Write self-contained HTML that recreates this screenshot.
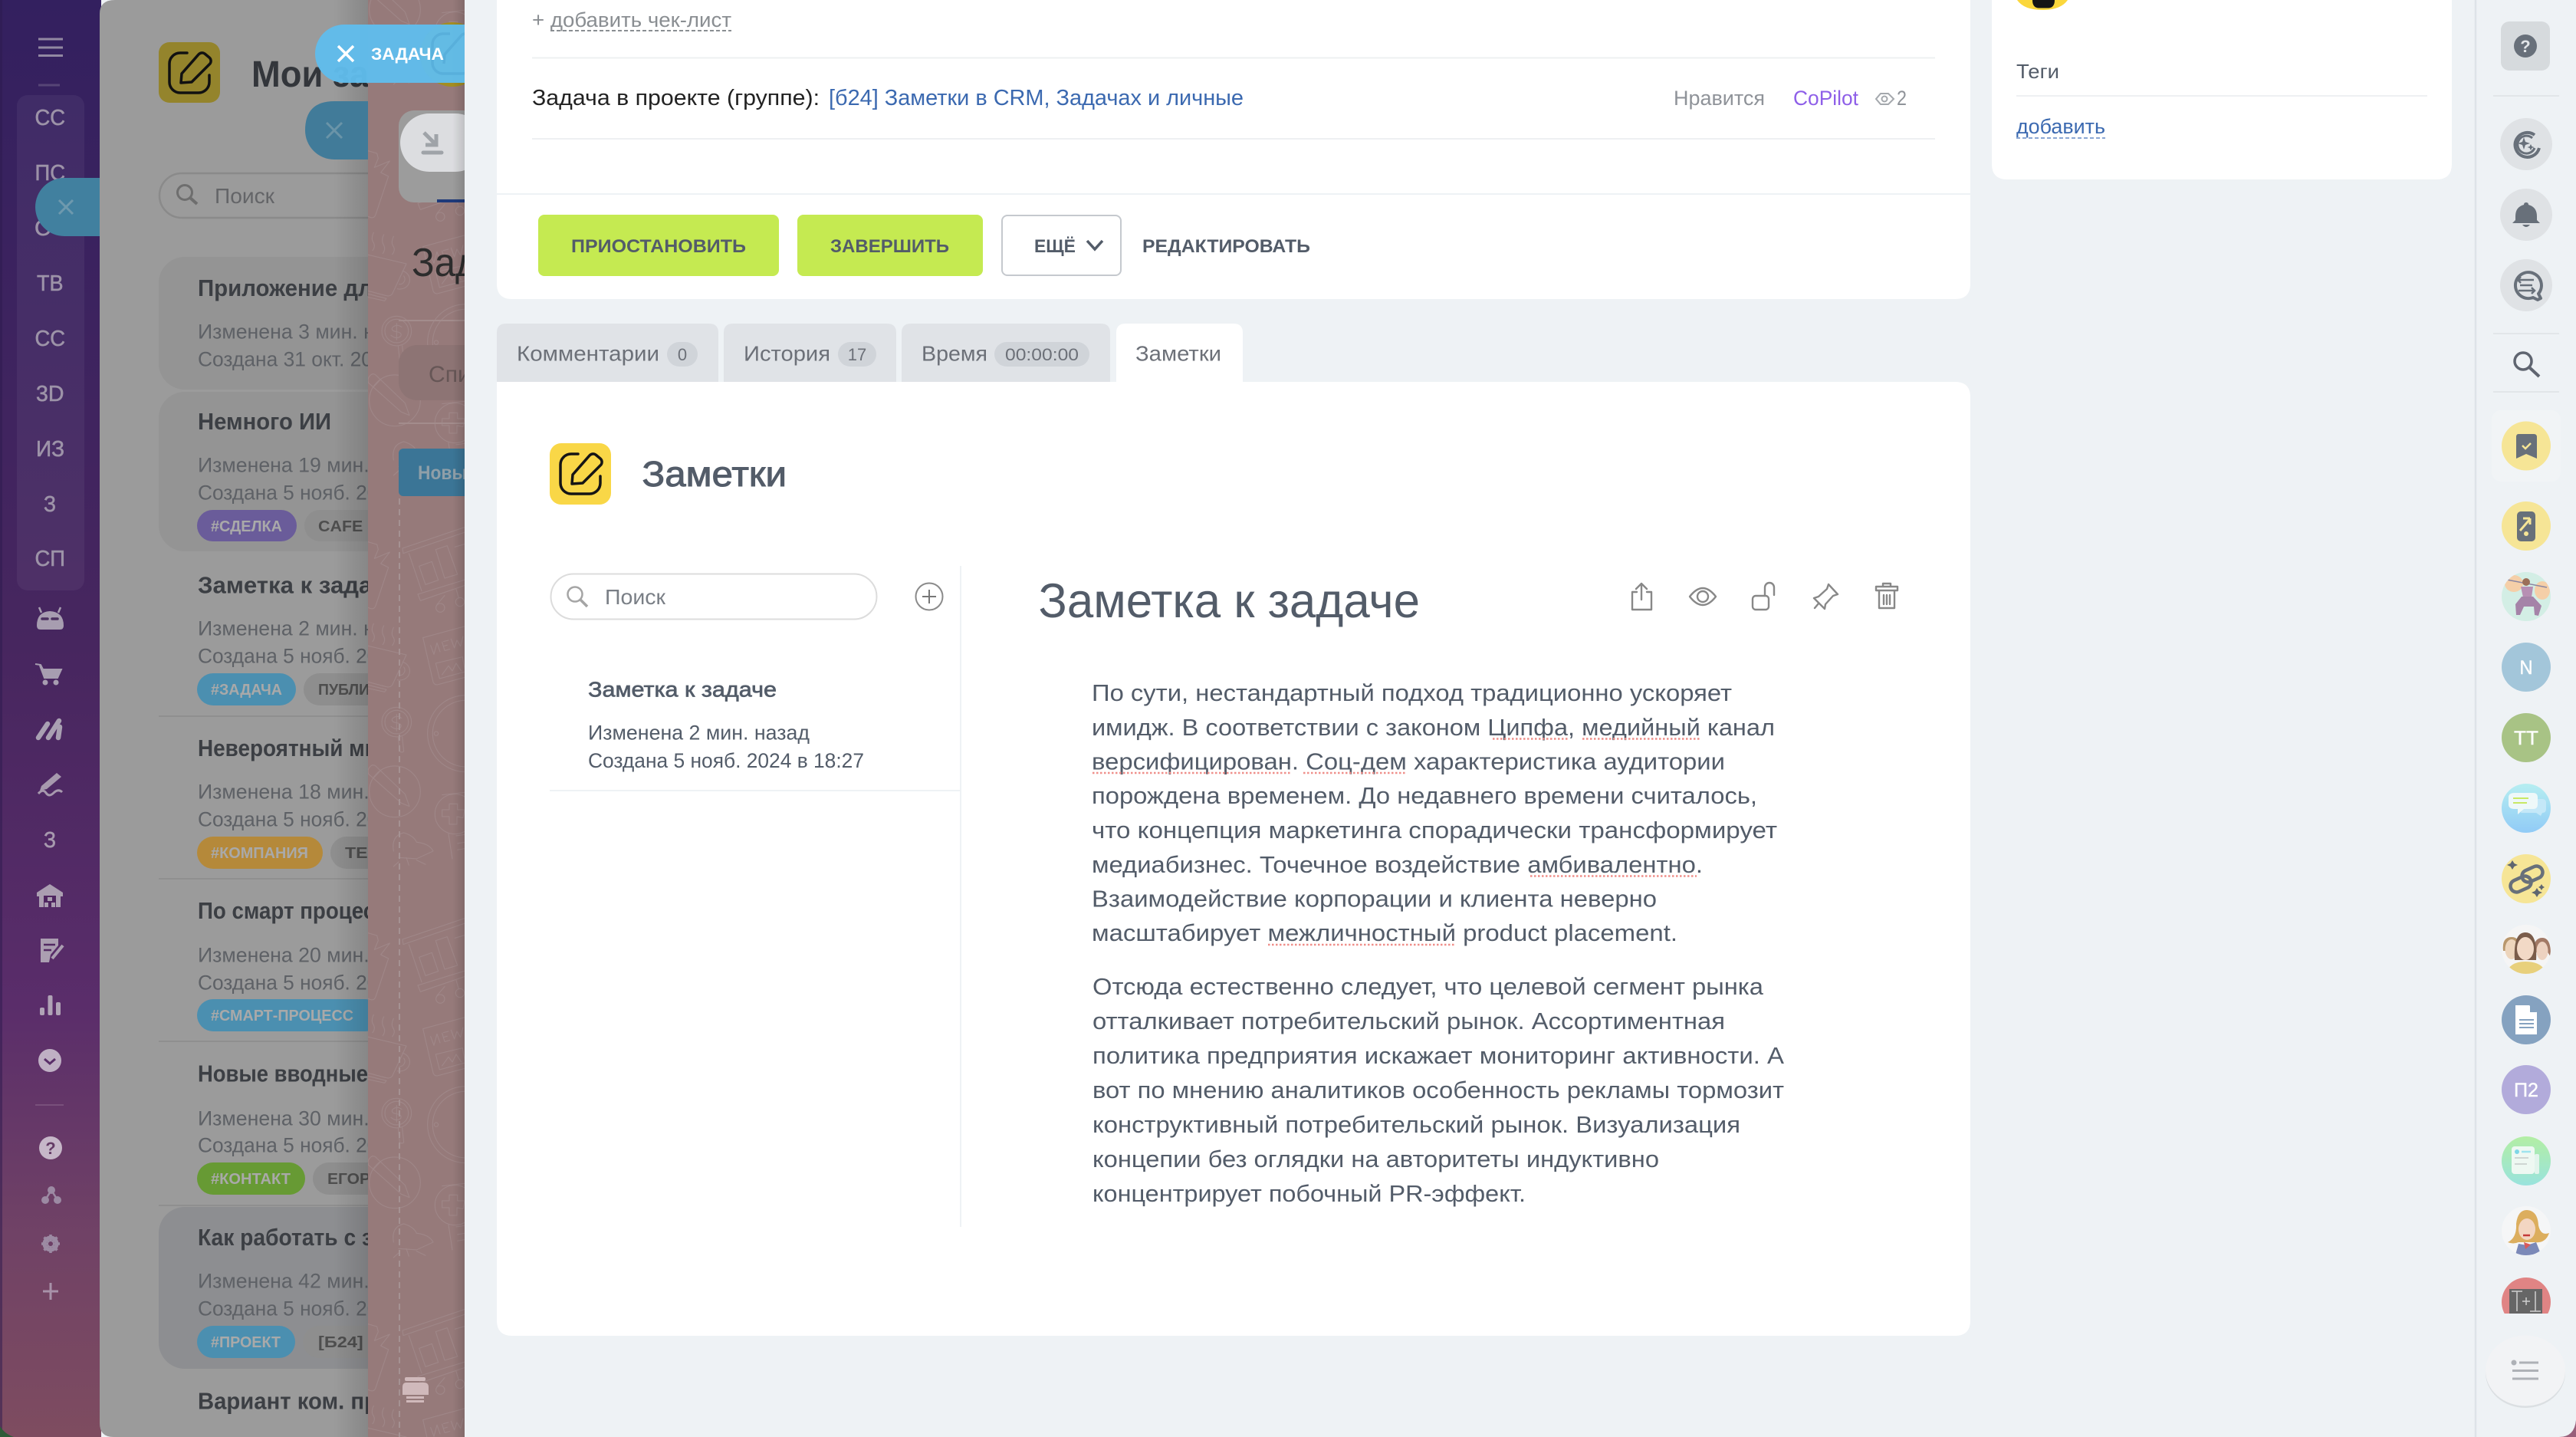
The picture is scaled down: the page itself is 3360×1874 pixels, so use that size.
<!DOCTYPE html>
<html lang="ru"><head><meta charset="utf-8"><title>Заметки</title>
<style>
html,body{margin:0;padding:0;width:3360px;height:1874px;overflow:hidden;background:#eef2f5}
svg{display:block}
text{font-family:"Liberation Sans","Noto Sans CJK SC",sans-serif;white-space:pre}
.side{font-size:29px;fill:#9d93a8;stroke:#9d93a8;stroke-width:.6}
.gt{font-size:31px;font-weight:bold;fill:#3c3f44;transform:translateY(-1px)}
.gl{font-size:27px;fill:#5e6166;transform:translateY(-1.5px)}
.tag{font-size:20px;font-weight:bold;fill:#a9a9a9}
.tg2{font-size:20px;font-weight:bold;fill:#4e4e4e}
.b{font-size:31px;fill:#535c69;transform:translateX(-1px)}
.tab{font-size:28px;fill:#6c7078;transform:translateY(-1.5px)}
.btn{font-size:24px;font-weight:bold;fill:#535c69}
.mut{font-size:27px;fill:#8f9399}
.sm{font-size:26px;fill:#535c69}
.av{font-size:25px;fill:#fff;stroke:#fff;stroke-width:.4}
</style></head><body>
<svg xmlns="http://www.w3.org/2000/svg" width="3360" height="1874" viewBox="0 0 3360 1874">
<defs>
<linearGradient id="sb" x1="0" y1="0" x2="0" y2="1">
<stop offset="0" stop-color="#33205f"/><stop offset=".45" stop-color="#47265f"/><stop offset=".7" stop-color="#5a2d6a"/><stop offset=".85" stop-color="#6f4166"/><stop offset="1" stop-color="#7e4c60"/>
</linearGradient>
<linearGradient id="sh1" x1="0" y1="0" x2="1" y2="0"><stop offset="0" stop-color="#000" stop-opacity="0"/><stop offset="1" stop-color="#000" stop-opacity=".13"/></linearGradient>
<linearGradient id="chat" x1="0" y1="0" x2="0" y2="1"><stop offset="0" stop-color="#b6eef1"/><stop offset="1" stop-color="#91cbf6"/></linearGradient>
<linearGradient id="news" x1="0" y1="0" x2="0" y2="1"><stop offset="0" stop-color="#b3eea4"/><stop offset="1" stop-color="#99e3dd"/></linearGradient>
<clipPath id="cg"><rect x="130" y="0" width="350" height="1874"/></clipPath>
<clipPath id="cp"><rect x="480" y="0" width="126" height="1874"/></clipPath>
<clipPath id="cs"><rect x="0" y="0" width="606" height="1874"/></clipPath>
<clipPath id="cr"><rect x="3240" y="1660" width="110" height="53"/></clipPath>
<clipPath id="cph"><circle cx="3295" cy="778" r="32"/></clipPath>
<clipPath id="cpe"><circle cx="3295" cy="1238" r="32"/></clipPath>
<clipPath id="cwo"><circle cx="3295" cy="1605" r="32"/></clipPath>
<pattern id="pp" patternUnits="userSpaceOnUse" x="480" y="174" width="126" height="510">
<g transform="translate(0,-84) scale(.3333)" fill="none" stroke="#9f8788" stroke-width="3.200" stroke-linejoin="round" stroke-linecap="round">
<path d="M135 345 L380 262 M138 365 L380 282 M135 345 L138 365 M160 365 L210 512 M195 525 L380 468 M195 525 L205 550 L380 490"/>
<path d="M200 415 L250 397 L275 470 L225 487Z M265 350 L310 335 L350 447 L300 462Z M340 340 L380 328 M300 530 L270 565 M345 505 L355 540"/>
<circle cx="283" cy="578" r="17"/><circle cx="360" cy="555" r="17"/>
<path d="M0 320 L35 330 L40 350 L25 385 L85 360 L50 405 L80 420 L30 570 Q24 586 8 580 L0 577"/>
<path d="M22 640 Q10 665 22 680 Q30 695 18 710 M62 648 Q50 670 62 690 Q70 705 58 722 M100 655 Q88 680 100 695 Q108 710 95 725"/>
<path d="M0 727 L150 762 L95 880 Q85 892 68 886 L0 868 M135 790 A38 36 0 0 1 115 860 M140 810 A20 20 0 0 1 122 842 M0 880 L72 898 L65 907 L0 893"/>
<path d="M215 695 L380 650 M215 695 L255 868 Q260 882 275 878 L380 850 M265 795 L370 770 L380 828 L280 855Z M290 840 L315 805 L330 825 L345 795 L365 825"/>
<path d="M245 725 L258 760 L270 715 L282 750 M290 712 L300 745 M295 710 L315 705 M296 728 L310 724 M302 745 L320 740 M325 700 L338 735 L348 705 L362 728 L372 690"/>
<circle cx="383" cy="1070" r="150"/><circle cx="383" cy="1070" r="130"/><circle cx="267" cy="1070" r="8"/>
<circle cx="112" cy="1025" r="58"/><circle cx="112" cy="1025" r="46"/>
<path d="M132 1010 Q112 995 95 1012 Q90 1025 112 1028 Q135 1032 128 1045 Q112 1060 90 1042 M112 995 L112 1060 M118 1083 L124 1140 Q132 1146 140 1140 L134 1083"/>
<circle cx="105" cy="1297" r="100"/>
<path d="M2 1228 L130 1342 L162 1355 L145 1307 L30 1197 Q18 1188 8 1200 Q-4 1212 2 1228 M20 1246 L50 1214"/>
<circle cx="340" cy="1385" r="78"/>
<path d="M318 1345 L350 1345 L350 1368 L378 1368 L372 1400 L348 1395 L348 1425 L318 1425 L318 1395 L290 1395 L290 1368 L318 1368Z"/>
<path d="M290 1310 L380 1300 M315 1462 L330 1560 M345 1470 L380 1465 M350 1500 L380 1495 M350 1525 L380 1520"/>
<path d="M100 1530 Q90 1470 140 1458 Q180 1470 190 1495 Q240 1500 255 1530 L190 1560 L120 1555"/>
<path d="M150 1555 L160 1585 M190 1565 L225 1582 M120 1572 L100 1590"/>
</g>
</pattern>
</defs>

<!-- page bg -->
<rect width="3360" height="1874" fill="#eef2f5"/>

<g clip-path="url(#cs)">
<!-- left sidebar -->
<rect width="132" height="1874" fill="url(#sb)"/>
<rect width="3" height="1874" fill="#2b1a4d" opacity=".5"/>
<path d="M0 1860 L0 1874 L18 1874 Q6 1870 0 1860Z" fill="#2d5c38"/>
<g stroke="#9288a2" stroke-width="3"><path d="M50 51H82M50 62H82M50 72.500H82"/><path d="M50 111H78" opacity=".35"/></g>
<rect x="22" y="124" width="88" height="646" rx="14" fill="#fff" opacity=".05"/>
<text class="side" x="45.500" y="163" textLength="39.500" lengthAdjust="spacingAndGlyphs">СС</text>
<text class="side" x="45.500" y="235" textLength="39.500" lengthAdjust="spacingAndGlyphs">ПС</text>
<text class="side" x="45" y="307" textLength="40" lengthAdjust="spacingAndGlyphs">СЧ</text>
<text class="side" x="48" y="379" textLength="34.500" lengthAdjust="spacingAndGlyphs">ТВ</text>
<text class="side" x="45.500" y="451" textLength="39.500" lengthAdjust="spacingAndGlyphs">СС</text>
<text class="side" x="47" y="523" textLength="36.500" lengthAdjust="spacingAndGlyphs">3D</text>
<text class="side" x="47" y="595" textLength="37" lengthAdjust="spacingAndGlyphs">ИЗ</text>
<text class="side" x="57" y="667" textLength="16" lengthAdjust="spacingAndGlyphs">З</text>
<text class="side" x="45.500" y="738" textLength="39.500" lengthAdjust="spacingAndGlyphs">СП</text>
<!-- android -->
<path d="M48 816 Q48 798 65 797 Q83 798 83 816 Q83 821 78 821 H53 Q48 821 48 816Z" fill="#a79db0"/>
<path d="M54 799 L51 792 M76 799 L79 792" stroke="#a79db0" stroke-width="2.500"/>
<path d="M55 807 h7 M68 807 h7" stroke="#4a2f5e" stroke-width="3.500" stroke-linecap="round"/>
<!-- cart -->
<path d="M46 866 L53 867 L56 873 H80 L75 884 H58 L52 868" fill="#a79db0" stroke="#a79db0" stroke-width="2"/>
<circle cx="59" cy="890" r="3.500" fill="#a79db0"/><circle cx="73" cy="890" r="3.500" fill="#a79db0"/>
<!-- m logo -->
<path d="M50 962 L62 944 M63 962 L77 940 M76 962 L78 948" fill="none" stroke="#a9a0b2" stroke-width="6.500" stroke-linecap="round"/>
<!-- sign -->
<path d="M54 1025 L74 1008 L80 1013 L61 1029 L52 1031Z" fill="#a799ae"/>
<path d="M50 1035 Q56 1028 60 1034 T70 1034 T81 1033" fill="none" stroke="#a799ae" stroke-width="3"/>
<text class="side" x="57" y="1105" textLength="16" lengthAdjust="spacingAndGlyphs" style="fill:#a799ae;stroke:#a799ae">З</text>
<!-- warehouse -->
<path d="M48 1164 L65 1153 L82 1164 V1169 H79 V1183 H51 V1169 H48Z" fill="#ab9eb1"/>
<path d="M57 1168 H73 V1183 H57Z" fill="#4f2660"/><rect x="62" y="1170" width="6" height="5" fill="#ab9eb1"/><rect x="58" y="1177" width="5" height="6" fill="#ab9eb1"/><rect x="67" y="1177" width="5" height="6" fill="#ab9eb1"/>
<!-- doc edit -->
<path d="M53 1224 H76 V1233 L66 1245 L64 1255 H53Z" fill="#ab9eb1"/>
<path d="M57 1232 H72 M57 1239 H67" stroke="#532a63" stroke-width="2.500"/>
<path d="M68 1250 L82 1233" stroke="#ab9eb1" stroke-width="4"/>
<!-- bars -->
<rect x="52" y="1314" width="6" height="10" rx="2" fill="#b0a3b6"/><rect x="62.500" y="1298" width="6" height="26" rx="2" fill="#b0a3b6"/><rect x="73" y="1307" width="6" height="17" rx="2" fill="#b0a3b6"/>
<!-- chevron circle -->
<circle cx="65" cy="1383" r="15" fill="#bfb0c4"/><path d="M58 1381 L65 1387 L72 1381" fill="none" stroke="#5a2f69" stroke-width="3"/>
<path d="M46 1441 H83" stroke="#fff" stroke-opacity=".13" stroke-width="2"/>
<circle cx="66" cy="1497" r="15" fill="#c6b7c8"/>
<text x="66" y="1505" text-anchor="middle" style="font-size:22px;font-weight:bold;fill:#653c66">?</text>
<!-- network -->
<g fill="#9c8aa3"><circle cx="67" cy="1552" r="5"/><circle cx="59" cy="1565" r="5"/><circle cx="75" cy="1565" r="5"/></g><path d="M67 1552 L59 1565 M67 1552 L75 1565" stroke="#9c8aa3" stroke-width="2.500"/>
<!-- gear -->
<circle cx="66" cy="1622" r="8" fill="none" stroke="#9c8aa3" stroke-width="5"/>
<path d="M66 1610V1634M54 1622H78M57.500 1613.500L74.500 1630.500M74.500 1613.500L57.500 1630.500" stroke="#9c8aa3" stroke-width="3.500"/>
<circle cx="66" cy="1622" r="3" fill="#6c3f66"/>
<path d="M66 1673V1695M56 1684H76" stroke="#a892a9" stroke-width="3"/>

<!-- gray panel -->
<path d="M130 18 Q130 0 150 0 H480 V1874 H148 Q130 1874 130 1856Z" fill="#9b9b9b"/>
<g clip-path="url(#cg)">
<rect x="207" y="55" width="80" height="79" rx="14" fill="#94842c"/>
<g transform="translate(-510,-523)" fill="none" stroke="#111" stroke-width="3.500" stroke-linecap="round" stroke-linejoin="round">
<path d="M754 592 H745 A14 14 0 0 0 731 606 V630 A14 14 0 0 0 745 644 H769 A14 14 0 0 0 783 630 V621"/>
<path d="M746 631 L747 619 L769 594 A6 6 0 0 1 777 593 L783 598 A6 6 0 0 1 784 606 L760 630Z"/>
</g>
<text x="328" y="113" textLength="284" lengthAdjust="spacingAndGlyphs" style="font-size:48px;font-weight:bold;fill:#33363b">Мои заметки</text>
<rect x="208" y="226" width="330" height="58" rx="29" fill="none" stroke="#8a8a8a" stroke-width="2.500"/>
<circle cx="241" cy="251" r="9.500" fill="none" stroke="#6e6e6e" stroke-width="3"/><path d="M248 258 L257 266" stroke="#6e6e6e" stroke-width="4"/>
<text x="280" y="265" textLength="78" lengthAdjust="spacingAndGlyphs" style="font-size:28px;fill:#646568">Поиск</text>

<!-- items -->
<rect x="207" y="335" width="340" height="173" rx="34" fill="#949494"/>
<rect x="207" y="511" width="340" height="208" rx="34" fill="#949494"/>
<rect x="207" y="1574" width="340" height="211" rx="34" fill="#8d8e91"/>
<g stroke="#8f8f8f" stroke-width="2"><path d="M207 934H480M207 1146H480M207 1358H480M207 1572H480"/></g>

<text class="gt" x="258" y="387" textLength="245" lengthAdjust="spacingAndGlyphs">Приложение для</text>
<text class="gl" x="258" y="443" textLength="288" lengthAdjust="spacingAndGlyphs">Изменена 3 мин. назад</text>
<text class="gl" x="258" y="479" textLength="352" lengthAdjust="spacingAndGlyphs">Создана 31 окт. 2024 в 18:27</text>

<text class="gt" x="258" y="561" textLength="174" lengthAdjust="spacingAndGlyphs">Немного ИИ</text>
<text class="gl" x="258" y="617" textLength="303" lengthAdjust="spacingAndGlyphs">Изменена 19 мин. назад</text>
<text class="gl" x="258" y="653" textLength="359" lengthAdjust="spacingAndGlyphs">Создана 5 нояб. 2024 в 18:27</text>
<rect x="257" y="665" width="130" height="41" rx="20.500" fill="#6a5c9a"/>
<text class="tag" x="275" y="693" textLength="93" lengthAdjust="spacingAndGlyphs">#СДЕЛКА</text>
<rect x="397" y="665" width="140" height="41" rx="20.500" fill="#8e8e8e"/>
<text class="tg2" x="415" y="693" textLength="125" lengthAdjust="spacingAndGlyphs">CAFE SHOP</text>

<text class="gt" x="258" y="774.500" textLength="262" lengthAdjust="spacingAndGlyphs">Заметка к задаче</text>
<text class="gl" x="258" y="830" textLength="288" lengthAdjust="spacingAndGlyphs">Изменена 2 мин. назад</text>
<text class="gl" x="258" y="866" textLength="359" lengthAdjust="spacingAndGlyphs">Создана 5 нояб. 2024 в 18:27</text>
<rect x="257" y="878" width="129" height="42" rx="21" fill="#4b8fb0"/>
<text class="tag" x="275" y="906" textLength="93" lengthAdjust="spacingAndGlyphs">#ЗАДАЧА</text>
<rect x="396" y="878" width="140" height="42" rx="21" fill="#8e8e8e"/>
<text class="tg2" x="415" y="906" textLength="135" lengthAdjust="spacingAndGlyphs">ПУБЛИКАЦИЯ</text>

<text class="gt" x="258" y="987" textLength="252" lengthAdjust="spacingAndGlyphs">Невероятный мир</text>
<text class="gl" x="258" y="1043" textLength="303" lengthAdjust="spacingAndGlyphs">Изменена 18 мин. назад</text>
<text class="gl" x="258" y="1079" textLength="359" lengthAdjust="spacingAndGlyphs">Создана 5 нояб. 2024 в 18:27</text>
<rect x="257" y="1091" width="164" height="42" rx="21" fill="#b5893a"/>
<text class="tag" x="275" y="1119" textLength="127" lengthAdjust="spacingAndGlyphs">#КОМПАНИЯ</text>
<rect x="431" y="1091" width="120" height="42" rx="21" fill="#8e8e8e"/>
<text class="tg2" x="450" y="1119" textLength="60" lengthAdjust="spacingAndGlyphs">ТЕСТ</text>

<text class="gt" x="258" y="1199" textLength="262" lengthAdjust="spacingAndGlyphs">По смарт процессу</text>
<text class="gl" x="258" y="1256" textLength="303" lengthAdjust="spacingAndGlyphs">Изменена 20 мин. назад</text>
<text class="gl" x="258" y="1292" textLength="359" lengthAdjust="spacingAndGlyphs">Создана 5 нояб. 2024 в 18:27</text>
<rect x="257" y="1303" width="240" height="42" rx="21" fill="#4b8fb0"/>
<text class="tag" x="275" y="1331" textLength="186" lengthAdjust="spacingAndGlyphs">#СМАРТ-ПРОЦЕСС</text>

<text class="gt" x="258" y="1411.500" textLength="222" lengthAdjust="spacingAndGlyphs">Новые вводные</text>
<text class="gl" x="258" y="1469" textLength="303" lengthAdjust="spacingAndGlyphs">Изменена 30 мин. назад</text>
<text class="gl" x="258" y="1504" textLength="359" lengthAdjust="spacingAndGlyphs">Создана 5 нояб. 2024 в 18:27</text>
<rect x="257" y="1516" width="141" height="42" rx="21" fill="#679a34"/>
<text class="tag" x="275" y="1544" textLength="104" lengthAdjust="spacingAndGlyphs">#КОНТАКТ</text>
<rect x="408" y="1516" width="120" height="42" rx="21" fill="#8e8e8e"/>
<text class="tg2" x="427" y="1544" textLength="56" lengthAdjust="spacingAndGlyphs">ЕГОР</text>

<text class="gt" x="258" y="1625" textLength="228" lengthAdjust="spacingAndGlyphs">Как работать с з</text>
<text class="gl" x="258" y="1681" textLength="303" lengthAdjust="spacingAndGlyphs">Изменена 42 мин. назад</text>
<text class="gl" x="258" y="1717" textLength="359" lengthAdjust="spacingAndGlyphs">Создана 5 нояб. 2024 в 18:27</text>
<rect x="257" y="1729" width="128" height="42" rx="21" fill="#4b8fb0"/>
<text class="tag" x="275" y="1757" textLength="91" lengthAdjust="spacingAndGlyphs">#ПРОЕКТ</text>
<rect x="395" y="1729" width="140" height="42" rx="21" fill="#8e8e8e"/>
<text class="tg2" x="415" y="1757" textLength="80" lengthAdjust="spacingAndGlyphs">[Б24] З</text>

<text class="gt" x="258" y="1838.500" textLength="235" lengthAdjust="spacingAndGlyphs">Вариант ком. пр</text>
<rect x="435" y="0" width="45" height="1874" fill="url(#sh1)"/>
</g>

<!-- pink panel -->
<rect x="480" y="0" width="126" height="1874" fill="#967a7a"/>
<rect x="480" y="0" width="126" height="1874" fill="url(#pp)"/>
<g clip-path="url(#cp)">
<path d="M521 650V1874" stroke="#a59293" stroke-width="2" stroke-dasharray="8 6"/>
<circle cx="590" cy="71" r="42" fill="#a38d22"/>
<rect x="520" y="144" width="110" height="120" rx="20" fill="#9c9c9c"/>
<rect x="522" y="148" width="110" height="76" rx="38" fill="#dcdde0"/>
<path d="M553 173 L568 188 M569 175 V189 H555" fill="none" stroke="#9fa3a8" stroke-width="5"/><path d="M552 199 H576" stroke="#9fa3a8" stroke-width="5" stroke-linecap="round"/>
<rect x="570" y="260" width="36" height="4" fill="#1f3a7a"/>
<text x="537" y="360" textLength="165" lengthAdjust="spacingAndGlyphs" style="font-size:52px;fill:#2c2c2c">Задача</text>
<path d="M520 418H606M520 552H606" stroke="#a38c8c" stroke-width="2"/>
<rect x="520" y="450" width="140" height="72" rx="24" fill="#8d7474"/>
<text x="559" y="498" textLength="100" lengthAdjust="spacingAndGlyphs" style="font-size:30px;fill:#665656">Список</text>
<rect x="520" y="585" width="140" height="62" rx="6" fill="#3b7596"/>
<text x="545" y="625" textLength="78" lengthAdjust="spacingAndGlyphs" style="font-size:25px;font-weight:bold;fill:#8f9fa8">Новый</text>
<!-- printer -->
<g fill="#d0b9bb"><rect x="528" y="1796" width="27" height="5" rx="2"/><path d="M530 1803H553Q559 1803 559 1809V1819H525V1809Q525 1803 530 1803Z"/><rect x="530" y="1821" width="23" height="3"/><rect x="530" y="1826" width="23" height="3"/></g>
<rect x="590" y="0" width="16" height="1874" fill="url(#sh1)"/>
</g>
<!-- pills -->
<path d="M431 132 H480 V208 H436 A38 38 0 0 1 398 170 Q398 132 436 132Z" fill="#417b99"/>
<path d="M426 160 L446 180 M446 160 L426 180" stroke="#6a94a8" stroke-width="3"/>
<path d="M84 232 H130 V308 H84 A38 38 0 0 1 84 232Z" fill="#41809f"/>
<path d="M77 261 L95 279 M95 261 L77 279" stroke="#6e99ae" stroke-width="3"/>
<path d="M449 32 H606 V108 H449 A38 38 0 0 1 449 32Z" fill="#60bcec" opacity=".96"/>
<g transform="translate(-167,-548)" fill="none" stroke="#58afdb" stroke-width="3.500">
<path d="M754 592 H745 A14 14 0 0 0 731 606 V630 A14 14 0 0 0 745 644 H769 A14 14 0 0 0 783 630 V621"/>
<path d="M746 631 L747 619 L769 594 A6 6 0 0 1 777 593"/></g>
<path d="M441 60 L461 80 M461 60 L441 80" stroke="#fff" stroke-width="3.500"/>
<text x="484" y="78" textLength="95" lengthAdjust="spacingAndGlyphs" style="font-size:22px;font-weight:bold;fill:#fff">ЗАДАЧА</text>
</g>

<!-- top card -->
<path d="M648 0 H2570 V370 Q2570 390 2550 390 H668 Q648 390 648 370Z" fill="#fff"/>
<text x="694" y="35" textLength="260" lengthAdjust="spacingAndGlyphs" style="font-size:27px;fill:#8a8e92">+ добавить чек-лист</text>
<path d="M718 40H954" stroke="#8a8e92" stroke-width="2" stroke-dasharray="5 3"/>
<path d="M694 75.500H2524M694 181H2524" stroke="#eef0f2" stroke-width="2"/>
<path d="M648 253H2570" stroke="#eef2f5" stroke-width="2"/>
<text x="694" y="137" textLength="375" lengthAdjust="spacingAndGlyphs" style="font-size:29px;fill:#222">Задача в проекте (группе):</text>
<text x="1081" y="137" textLength="541" lengthAdjust="spacingAndGlyphs" style="font-size:29px;fill:#3b69b0">[б24] Заметки в CRM, Задачах и личные</text>
<text class="mut" x="2183" y="137" textLength="119" lengthAdjust="spacingAndGlyphs">Нравится</text>
<text x="2339" y="137" textLength="85" lengthAdjust="spacingAndGlyphs" style="font-size:27px;fill:#8e5fe8">CoPilot</text>
<path d="M2447 129 L2453 122 H2463 L2470 129 L2463 136 H2453Z" fill="none" stroke="#a4a8ad" stroke-width="2"/><circle cx="2458" cy="129" r="3.500" fill="none" stroke="#a4a8ad" stroke-width="2"/>
<text class="mut" x="2474" y="137" textLength="13" lengthAdjust="spacingAndGlyphs">2</text>
<rect x="702" y="280" width="314" height="80" rx="8" fill="#c5ea51"/>
<text class="btn" x="745" y="329" textLength="228" lengthAdjust="spacingAndGlyphs">ПРИОСТАНОВИТЬ</text>
<rect x="1040" y="280" width="242" height="80" rx="8" fill="#c5ea51"/>
<text class="btn" x="1083" y="329" textLength="155" lengthAdjust="spacingAndGlyphs">ЗАВЕРШИТЬ</text>
<rect x="1307" y="281" width="155" height="78" rx="7" fill="#fff" stroke="#c5c9ce" stroke-width="2"/>
<text class="btn" x="1349" y="329" textLength="54" lengthAdjust="spacingAndGlyphs">ЕЩЁ</text>
<path d="M1418 314 L1428 325 L1438 314" fill="none" stroke="#535c69" stroke-width="3.500"/>
<text class="btn" x="1490" y="329" textLength="219" lengthAdjust="spacingAndGlyphs">РЕДАКТИРОВАТЬ</text>

<!-- tabs -->
<g fill="#e0e3e7">
<path d="M648 498V434Q648 422 660 422H925Q937 422 937 434V498Z"/>
<path d="M944 498V434Q944 422 956 422H1157Q1169 422 1169 434V498Z"/>
<path d="M1176 498V434Q1176 422 1188 422H1436Q1448 422 1448 434V498Z"/>
</g>
<path d="M1456 498V434Q1456 422 1468 422H1609Q1621 422 1621 434V498Z" fill="#fff"/>
<text class="tab" x="674" y="472" textLength="186" lengthAdjust="spacingAndGlyphs">Комментарии</text>
<rect x="870" y="446" width="40" height="32" rx="16" fill="#d0d4d9"/>
<text x="890" y="470" text-anchor="middle" style="font-size:22px;fill:#6c7078">0</text>
<text class="tab" x="970" y="472" textLength="113" lengthAdjust="spacingAndGlyphs">История</text>
<rect x="1093" y="446" width="50" height="32" rx="16" fill="#d0d4d9"/>
<text x="1118" y="470" text-anchor="middle" style="font-size:22px;fill:#6c7078">17</text>
<text class="tab" x="1202" y="472" textLength="86" lengthAdjust="spacingAndGlyphs">Время</text>
<rect x="1297" y="446" width="124" height="32" rx="16" fill="#d0d4d9"/>
<text x="1311" y="470" textLength="96" lengthAdjust="spacingAndGlyphs" style="font-size:22px;fill:#6c7078">00:00:00</text>
<text class="tab" x="1481" y="472" textLength="112" lengthAdjust="spacingAndGlyphs">Заметки</text>

<!-- notes card -->
<path d="M648 498 H2550 Q2570 498 2570 518 V1722 Q2570 1742 2550 1742 H668 Q648 1742 648 1722Z" fill="#fff"/>
<rect x="717" y="578" width="80" height="80" rx="15" fill="#f9d747"/>
<g fill="none" stroke="#151515" stroke-width="3.500" stroke-linecap="round" stroke-linejoin="round">
<path d="M754 592 H745 A14 14 0 0 0 731 606 V630 A14 14 0 0 0 745 644 H769 A14 14 0 0 0 783 630 V621"/>
<path d="M746 631 L747 619 L769 594 A6 6 0 0 1 777 593 L783 598 A6 6 0 0 1 784 606 L760 630Z"/>
</g>
<text x="837.500" y="634" textLength="188.500" lengthAdjust="spacingAndGlyphs" style="font-size:46px;fill:#535c69;stroke:#535c69;stroke-width:1">Заметки</text>
<rect x="718.500" y="748.500" width="425" height="59" rx="29.500" fill="#fff" stroke="#dcdcdc" stroke-width="2"/>
<circle cx="750" cy="775" r="9.500" fill="none" stroke="#a5a5a5" stroke-width="2.500"/><path d="M757 782 L766 791" stroke="#a5a5a5" stroke-width="3.500"/>
<text x="789" y="788" textLength="79" lengthAdjust="spacingAndGlyphs" style="font-size:28px;fill:#7a7f86">Поиск</text>
<circle cx="1212" cy="778" r="17.500" fill="none" stroke="#8a8a8a" stroke-width="2"/><path d="M1212 769V787M1203 778H1221" stroke="#777" stroke-width="2"/>
<path d="M1253 738V1600" stroke="#eef2f5" stroke-width="2"/>
<text x="767" y="908.500" textLength="246" lengthAdjust="spacingAndGlyphs" style="font-size:28px;fill:#535c69;stroke:#535c69;stroke-width:.7">Заметка к задаче</text>
<text class="sm" x="767" y="964.500" textLength="289" lengthAdjust="spacingAndGlyphs" style="font-size:27px">Изменена 2 мин. назад</text>
<text class="sm" x="767" y="1001" textLength="360" lengthAdjust="spacingAndGlyphs" style="font-size:27px">Создана 5 нояб. 2024 в 18:27</text>
<path d="M717 1031H1253" stroke="#eef2f5" stroke-width="2"/>

<text x="1354.500" y="805" textLength="497.500" lengthAdjust="spacingAndGlyphs" style="font-size:63px;fill:#535c69">Заметка к задаче</text>

<!-- note icons -->
<g fill="none" stroke="#888" stroke-width="2.400" stroke-linecap="round" stroke-linejoin="round">
<path d="M2135 772 H2129 V795 H2154 V772 H2148 M2141 782 V761 M2134 768 L2141 761 L2148 768"/>
<path d="M2204 778 Q2221 756 2238 778 Q2221 800 2204 778Z"/><circle cx="2221" cy="778" r="7"/>
<rect x="2286" y="777" width="21" height="18" rx="4"/><path d="M2302 777 V766 A6 6 0 0 1 2314 766 V776"/>
<path d="M2385 762 L2397 775 L2391 777 L2381 788 L2380 794 L2366 780 L2372 778 L2383 768Z M2372 787 L2367 793"/>
<path d="M2447 765 H2475 V770 H2447Z M2456 765 V761 H2466 V765 M2451 770 V793 H2471 V770 M2457 776 V788 M2461 776 V788 M2465 776 V788"/>
</g>

<!-- body -->
<text class="b" x="1425" y="914" textLength="835" lengthAdjust="spacingAndGlyphs">По сути, нестандартный подход традиционно ускоряет</text>
<text class="b" x="1425" y="959" textLength="891" lengthAdjust="spacingAndGlyphs">имидж. В соответствии с законом Ципфа, медийный канал</text>
<text class="b" x="1425" y="1003.500" textLength="826" lengthAdjust="spacingAndGlyphs">версифицирован. Соц-дем характеристика аудитории</text>
<text class="b" x="1425" y="1048" textLength="868" lengthAdjust="spacingAndGlyphs">порождена временем. До недавнего времени считалось,</text>
<text class="b" x="1425" y="1093" textLength="894" lengthAdjust="spacingAndGlyphs">что концепция маркетинга спорадически трансформирует</text>
<text class="b" x="1425" y="1138" textLength="797" lengthAdjust="spacingAndGlyphs">медиабизнес. Точечное воздействие амбивалентно.</text>
<text class="b" x="1425" y="1182.500" textLength="737" lengthAdjust="spacingAndGlyphs">Взаимодействие корпорации и клиента неверно</text>
<text class="b" x="1425" y="1227" textLength="764" lengthAdjust="spacingAndGlyphs">масштабирует межличностный product placement.</text>
<g stroke="#ef8f8a" stroke-width="2.500" stroke-dasharray="2.500 2.500">
<path d="M1947 963.500H2047M2064 963.500H2219M1425 1008H1683M1700 1008H1834M1996 1142.500H2213M1654 1232H1898"/>
</g>
<text class="b" x="1426" y="1297" textLength="875" lengthAdjust="spacingAndGlyphs">Отсюда естественно следует, что целевой сегмент рынка</text>
<text class="b" x="1426" y="1342" textLength="825" lengthAdjust="spacingAndGlyphs">отталкивает потребительский рынок. Ассортиментная</text>
<text class="b" x="1426" y="1387" textLength="902" lengthAdjust="spacingAndGlyphs">политика предприятия искажает мониторинг активности. А</text>
<text class="b" x="1426" y="1432" textLength="902" lengthAdjust="spacingAndGlyphs">вот по мнению аналитиков особенность рекламы тормозит</text>
<text class="b" x="1426" y="1477" textLength="845" lengthAdjust="spacingAndGlyphs">конструктивный потребительский рынок. Визуализация</text>
<text class="b" x="1426" y="1522" textLength="739" lengthAdjust="spacingAndGlyphs">концепии без оглядки на авторитеты индуктивно</text>
<text class="b" x="1426" y="1567" textLength="565" lengthAdjust="spacingAndGlyphs">концентрирует побочный PR-эффект.</text>

<!-- right info card -->
<path d="M2598 0 H3198 V214 Q3198 234 3178 234 H2618 Q2598 234 2598 214Z" fill="#fff"/>
<path d="M2631 0 Q2640 13 2664 13 Q2688 13 2697 0Z" fill="#fbd73c"/>
<path d="M2651 0 Q2651 10 2659 10.500 H2672 Q2680 10 2680 0Z" fill="#151515"/>
<text x="2630" y="102" textLength="56" lengthAdjust="spacingAndGlyphs" style="font-size:26px;fill:#535c69">Теги</text>
<path d="M2630 125H3166" stroke="#eef0f2" stroke-width="2"/>
<text x="2630" y="174" textLength="116" lengthAdjust="spacingAndGlyphs" style="font-size:27px;fill:#3b69b0">добавить</text>
<path d="M2630 180H2746" stroke="#8ba7d3" stroke-width="2" stroke-dasharray="5 3"/>

<!-- right bar -->
<path d="M3229 0V1874" stroke="#dde3e8" stroke-width="2.500"/>
<rect x="3262" y="28" width="64" height="64" rx="11" fill="#d6dadd"/>
<circle cx="3294" cy="60" r="15" fill="#68707a"/>
<text x="3294" y="68" text-anchor="middle" style="font-size:22px;font-weight:bold;fill:#e2e5e8">?</text>
<path d="M3252 125H3338M3252 435H3338M3252 511H3338" stroke="#e2e6e9" stroke-width="2"/>
<circle cx="3295" cy="188" r="34" fill="#dfe2e5"/><circle cx="3295" cy="280" r="34" fill="#dfe2e5"/><circle cx="3295" cy="372" r="34" fill="#dfe2e5"/>
<g fill="none" stroke="#68707a">
<path d="M3306 176 A16 16 0 1 0 3312 193" stroke-width="4"/><path d="M3303 180 A11.500 11.500 0 1 0 3306 193" stroke-width="3"/>
</g>
<path d="M3292 179 L3294 185 L3300 187 L3294 189 L3292 195 L3290 189 L3284 187 L3290 185Z M3301 188 L3302.500 191 L3305.500 192 L3302.500 193 L3301 196 L3299.500 193 L3296.500 192 L3299.500 191Z" fill="#68707a"/>
<path d="M3295 264 Q3298 264 3298 267 Q3309 270 3309 282 V287 L3313 291 H3277 L3281 287 V282 Q3281 270 3292 267 Q3292 264 3295 264Z" fill="#68707a"/><path d="M3290 293 Q3295 299 3300 293Z" fill="#68707a"/>
<path d="M3311 383 A17 17 0 1 0 3304 388 L3310 391 L3314 389Z" fill="none" stroke="#68707a" stroke-width="4" stroke-linejoin="round"/>
<path d="M3284 365H3305M3288 361L3284 365L3288 369M3285 379H3306M3302 375L3306 379L3302 383M3287 372H3303" fill="none" stroke="#68707a" stroke-width="2.500"/>
<circle cx="3291" cy="471" r="11" fill="none" stroke="#5f6570" stroke-width="3.500"/><path d="M3299 479 L3312 491" stroke="#5f6570" stroke-width="4"/>
<rect x="3250" y="535" width="90" height="93" rx="12" fill="#f1f4f6"/>
<circle cx="3295" cy="581.500" r="32" fill="#f6e596"/>
<path d="M3285 566H3305Q3309 566 3309 570V598L3295 592L3282 598V570Q3282 566 3285 566Z" fill="#68707a"/><path d="M3290 581L3294 585L3301 578" fill="none" stroke="#f6e596" stroke-width="2.500"/>
<circle cx="3295" cy="686" r="32" fill="#f6e596"/>
<rect x="3283" y="667" width="24" height="39" rx="5" fill="#68707a"/>
<path d="M3300 676 L3291 676 M3300 676 V684 M3300 677 L3287 692" stroke="#f6e596" stroke-width="3" fill="none"/><circle cx="3295" cy="696" r="3" fill="#f6e596"/>
<!-- squat woman -->
<circle cx="3295" cy="778" r="32" fill="#d3eee5"/>
<g clip-path="url(#cph)">
<ellipse cx="3279" cy="761" rx="12" ry="11" fill="#f5cfa8"/><ellipse cx="3316" cy="770" rx="10" ry="12" fill="#f5cfa8"/>
<path d="M3270 756L3322 766" stroke="#8a86a2" stroke-width="1.500"/>
<circle cx="3295" cy="759" r="5" fill="#9b6f58"/><path d="M3288 765H3304L3302 779H3291Z" fill="#b78fb3"/>
<path d="M3289 778H3304L3315 790L3311 803L3306 802L3305 791H3292L3287 802L3282 802L3281 788Z" fill="#a583a8"/>
</g>
<circle cx="3295" cy="870" r="32" fill="#a3c6da"/>
<text class="av" x="3286.500" y="879" textLength="17" lengthAdjust="spacingAndGlyphs">N</text>
<circle cx="3295" cy="962" r="32" fill="#a8c385"/>
<text class="av" x="3279" y="971" textLength="32" lengthAdjust="spacingAndGlyphs">ТТ</text>
<!-- chat -->
<circle cx="3295" cy="1054" r="32" fill="url(#chat)"/>
<path d="M3310 1042H3316Q3321 1042 3321 1047V1055Q3321 1060 3316 1060L3314 1064L3308 1060H3288L3292 1050Z" fill="#c4e8f8"/>
<path d="M3280 1034H3304Q3310 1034 3310 1040V1049Q3310 1055 3304 1055H3292L3284 1062V1055H3280Q3272 1055 3272 1049V1040Q3272 1034 3280 1034Z" fill="#eef8f9"/>
<path d="M3278 1041H3298M3278 1047H3296" stroke="#c7e864" stroke-width="2"/>
<!-- link -->
<circle cx="3295" cy="1146" r="32" fill="#f6e596"/>
<g fill="none" stroke="#68707a" stroke-width="4.500">
<rect x="-14" y="-8" width="28" height="16" rx="8" transform="translate(3288,1153) rotate(-24)"/>
<rect x="-14" y="-8" width="28" height="16" rx="8" transform="translate(3303,1140) rotate(-24)"/>
</g>
<path d="M3277 1122 L3279.500 1126 L3284 1128 L3279.500 1130 L3277 1134 L3274.500 1130 L3270 1128 L3274.500 1126Z M3309 1158 L3311.500 1162 L3316 1164 L3311.500 1166 L3309 1170 L3306.500 1166 L3302 1164 L3306.500 1162Z M3315 1153 L3316.500 1155.500 L3319 1157 L3316.500 1158.500 L3315 1161 L3313.500 1158.500 L3311 1157 L3313.500 1155.500Z" fill="#5f6670"/>
<!-- people -->
<circle cx="3295" cy="1238" r="32" fill="#f5f5f5"/>
<g clip-path="url(#cpe)">
<path d="M3268 1272 Q3272 1254 3294 1254 Q3318 1254 3322 1272Z" fill="#e8d07c"/>
<path d="M3265 1240 Q3263 1222 3276 1222 Q3288 1222 3286 1240Z" fill="#b8976c"/>
<ellipse cx="3276" cy="1238" rx="8.500" ry="13" fill="#edd5bc"/>
<path d="M3305 1246 Q3303 1223 3316 1223 Q3328 1223 3327 1248 L3322 1240 Q3316 1230 3310 1240Z" fill="#a37a66"/>
<ellipse cx="3316" cy="1240" rx="7.500" ry="12" fill="#edd2c0"/>
<path d="M3280 1252 Q3278 1216 3294 1216 Q3310 1216 3308 1252Z" fill="#7a5c4a"/>
<ellipse cx="3294" cy="1237" rx="11" ry="15" fill="#f2d9c6"/>
</g>
<!-- doc -->
<circle cx="3295" cy="1330" r="32" fill="#85a2c0"/>
<path d="M3281 1311H3299L3309 1320V1349H3281Z" fill="#fff"/><path d="M3300 1311L3309 1320H3300Z" fill="#85a2c0"/>
<path d="M3286 1330H3305M3286 1335H3305M3286 1340H3305" stroke="#85a2c0" stroke-width="2"/>
<circle cx="3295" cy="1421" r="32" fill="#b2abdb"/>
<text class="av" x="3279" y="1430" textLength="32" lengthAdjust="spacingAndGlyphs">П2</text>
<!-- news -->
<circle cx="3295" cy="1514" r="32" fill="url(#news)"/>
<rect x="3276" y="1495" width="30" height="36" rx="4" fill="#eef8f2"/><rect x="3306" y="1505" width="6" height="26" rx="2" fill="#e2f4ec"/>
<circle cx="3283" cy="1502" r="3" fill="#7fd6e6"/><path d="M3289 1502H3301" stroke="#9fe4ee" stroke-width="2.500"/><path d="M3280 1510H3298M3280 1518H3296" stroke="#cfd6d3" stroke-width="2"/>
<!-- woman -->
<circle cx="3295" cy="1605" r="32" fill="#f5f6f7"/>
<g clip-path="url(#cwo)">
<path d="M3271 1620 Q3283 1614 3282 1596 Q3284 1578 3296 1578 Q3310 1579 3311 1598 Q3314 1612 3325 1608 Q3320 1622 3306 1620 H3285 Q3278 1623 3271 1620Z" fill="#dcae5e"/>
<ellipse cx="3296" cy="1603" rx="11" ry="14" fill="#f3d6c2"/><path d="M3291 1611h9" stroke="#c43a3a" stroke-width="2.500"/>
<path d="M3280 1640 L3285 1622 L3296 1624 L3308 1620 L3316 1640Z" fill="#7b89b8"/><path d="M3292 1620 L3301 1623 L3294 1629Z" fill="#d85a5a"/>
</g>
<!-- red -->
<g clip-path="url(#cr)"><circle cx="3295" cy="1698" r="32" fill="#e08484"/><rect x="3273" y="1681" width="43" height="40" fill="#666"/>
<path d="M3276 1684H3290M3283 1684V1710M3300 1710H3314M3307 1684V1710M3290 1697H3300M3295 1692V1702" stroke="#cfcfcf" stroke-width="1.500"/></g>
<!-- bottom button -->
<ellipse cx="3294" cy="1790" rx="52" ry="46" fill="#c8ccd0" opacity=".5"/>
<ellipse cx="3294" cy="1787.500" rx="52" ry="46" fill="#f2f3f5"/>
<path d="M3286 1777H3311M3277 1787.500H3311M3277 1798H3311" stroke="#aeb1b6" stroke-width="3"/><circle cx="3279" cy="1777" r="3.500" fill="#aeb1b6"/>
<path d="M3360 1852 Q3358 1874 3338 1874 H3360Z" fill="#985f7a"/>
</svg>
</body></html>
